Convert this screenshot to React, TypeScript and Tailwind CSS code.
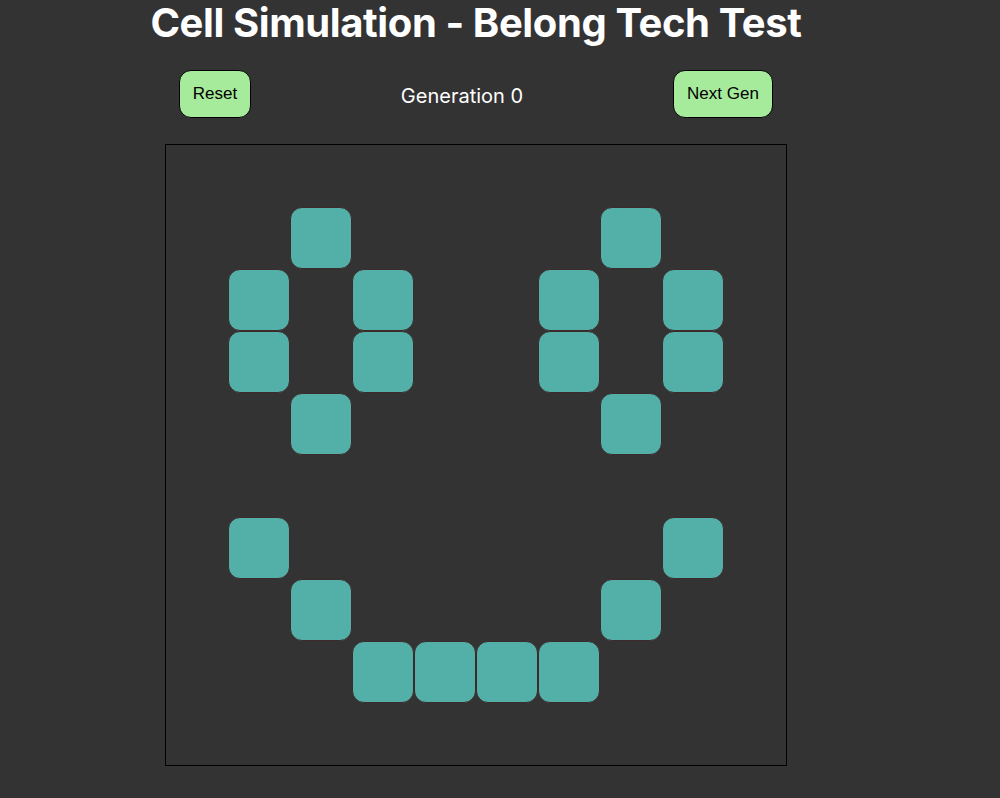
import { useState } from "react";

const SIZE = 10;

const initialAlive = [
	[1, 2], [1, 7],
	[2, 1], [2, 3], [2, 6], [2, 8],
	[3, 1], [3, 3], [3, 6], [3, 8],
	[4, 2], [4, 7],
	[6, 1], [6, 8],
	[7, 2], [7, 7],
	[8, 3], [8, 4], [8, 5], [8, 6],
];

function makeGrid() {
	const grid: boolean[][] = Array.from({ length: SIZE }, () => Array(SIZE).fill(false));
	initialAlive.forEach(([r, c]) => (grid[r][c] = true));
	return grid;
}

function step(grid: boolean[][]) {
	return grid.map((row, r) =>
		row.map((alive, c) => {
			let n = 0;
			for (let dr = -1; dr <= 1; dr++) {
				for (let dc = -1; dc <= 1; dc++) {
					if (dr === 0 && dc === 0) continue;
					const rr = (r + dr + SIZE) % SIZE;
					const cc = (c + dc + SIZE) % SIZE;
					if (grid[rr][cc]) n++;
				}
			}
			return alive ? n === 2 || n === 3 : n === 3;
		})
	);
}

export default function App() {
	const [grid, setGrid] = useState(makeGrid);
	const [generation, setGeneration] = useState(0);

	const reset = () => {
		setGrid(makeGrid());
		setGeneration(0);
	};

	const nextGen = () => {
		setGrid((g) => step(g));
		setGeneration((g) => g + 1);
	};

	const toggle = (r: number, c: number) => {
		setGrid((g) => g.map((row, ri) => row.map((v, ci) => (ri === r && ci === c ? !v : v))));
	};

	return (
		<div className="min-h-[798px] bg-[#333333] text-white font-['Inter',sans-serif]">
			<div className="w-[622px] ml-[165px] flex flex-col">
				<h1 className="mx-[-40px] text-[40px] font-bold leading-[44px] text-center tracking-[-0.4px] whitespace-nowrap pt-[1px]">
					Cell Simulation - Belong Tech Test
				</h1>

				{/* Controls */}
				<div className="flex justify-between items-center px-[14px] mt-[25px]">
					<button
						onClick={reset}
						className="w-[72px] h-[48px] rounded-[12px] border border-black bg-[#a6eb9b] text-black text-[17px] font-['Liberation_Sans',sans-serif]"
					>
						Reset
					</button>
					<span className="text-[20px] pt-[3px]">Generation {generation}</span>
					<button
						onClick={nextGen}
						className="w-[100px] h-[48px] rounded-[12px] border border-black bg-[#a6eb9b] text-black text-[17px] font-['Liberation_Sans',sans-serif]"
					>
						Next Gen
					</button>
				</div>

				{/* Board */}
				<div className="mt-[26px] border border-black grid grid-cols-[repeat(10,62px)] grid-rows-[repeat(10,62px)]">
					{grid.map((row, r) =>
						row.map((alive, c) => (
							<div
								key={`${r}-${c}`}
								onClick={() => toggle(r, c)}
								className={
									alive
										? "rounded-[12px] bg-[#52b0a8] border border-[#3d2a2a]"
										: ""
								}
							/>
						))
					)}
				</div>
			</div>
		</div>
	);
}
